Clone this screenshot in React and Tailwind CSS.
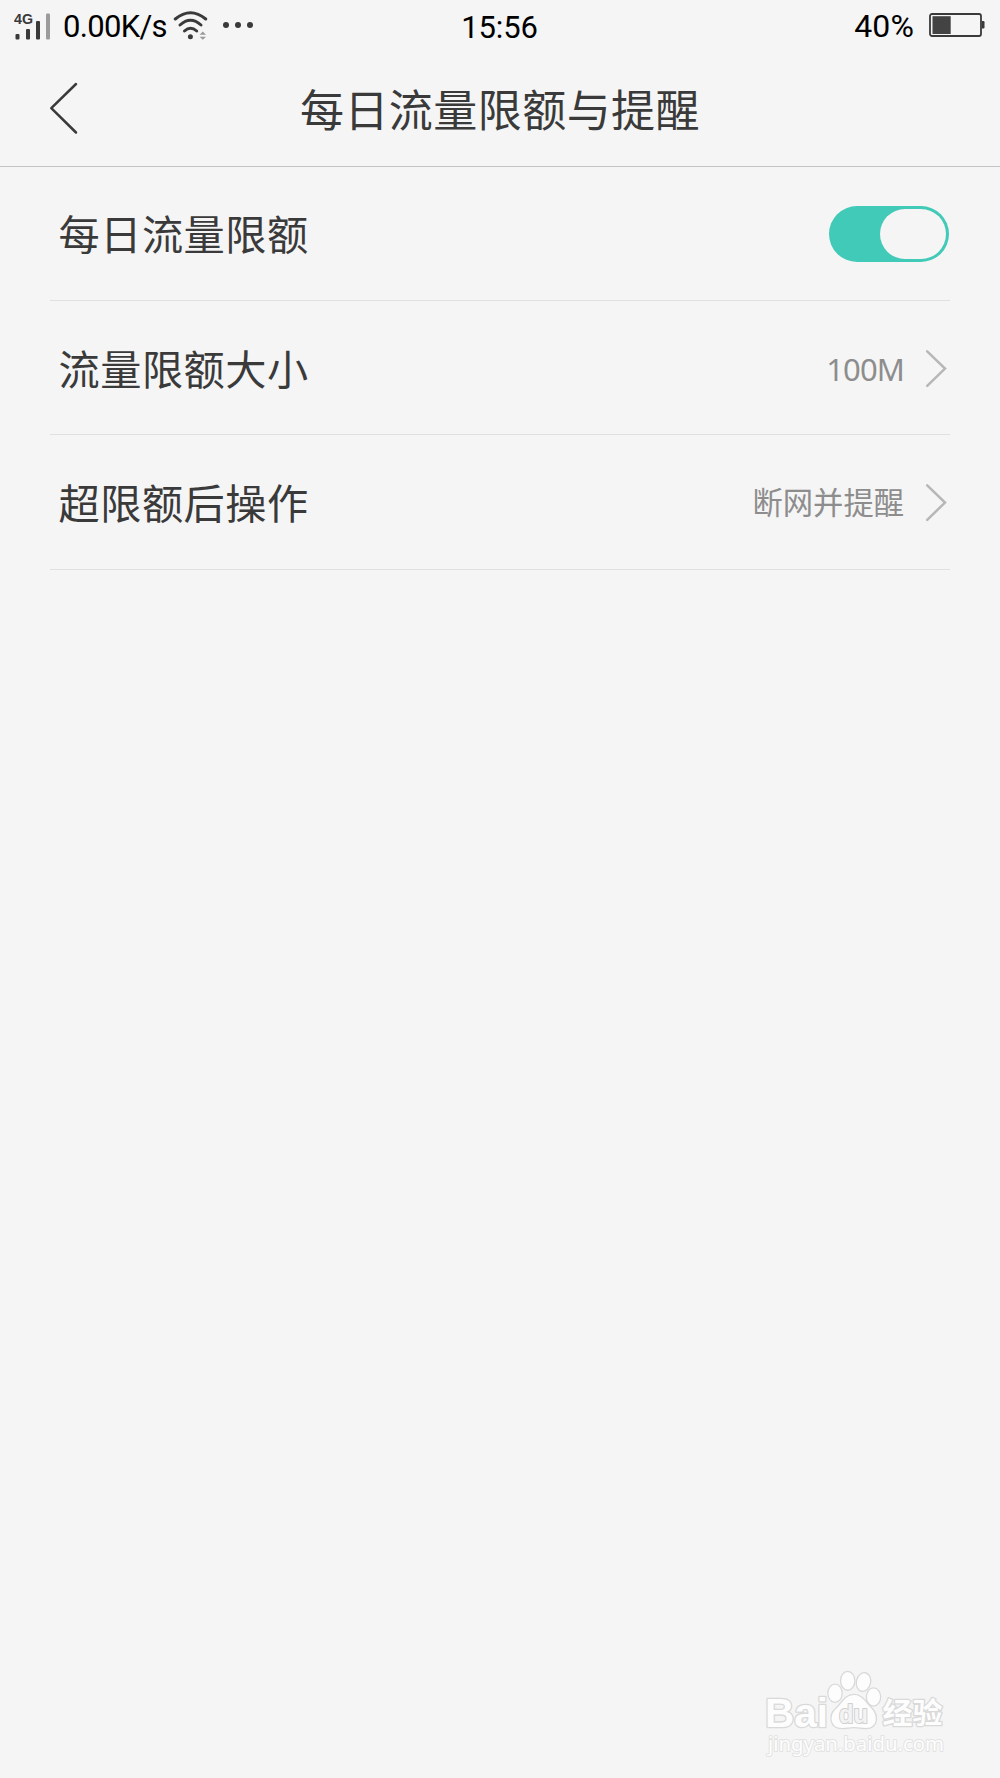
const INK = '#3a3a3a';

function Signal() {
  return (
    <svg className="block shrink-0" width="38" height="30" viewBox="0 0 38 30">
      <text x="0" y="13.5" fontSize="14" fontWeight="700" fill={INK} fontFamily='"Liberation Sans", sans-serif' textLength="19" lengthAdjust="spacingAndGlyphs">4G</text>
      <rect x="1.5" y="24" width="4" height="5.5" rx="1" fill={INK} />
      <rect x="12" y="19" width="4" height="10.5" rx="1" fill={INK} />
      <rect x="22" y="11" width="4" height="18.5" rx="1" fill={INK} />
      <rect x="32" y="3.5" width="4" height="26" rx="1" fill="#9b9b9b" />
    </svg>
  );
}

function Wifi() {
  return (
    <svg className="block shrink-0" width="36" height="30" viewBox="0 0 36 30">
      <g fill="none" stroke={INK} strokeWidth="3" strokeLinecap="round">
        <path d="M2.3 9 Q17.5 -3.6 32.7 9" />
        <path d="M7 15 Q17.5 5.6 28 15" />
        <path d="M11.5 21 Q17.5 15.4 23.7 21" />
      </g>
      <circle cx="17.4" cy="26.7" r="2.5" fill={INK} />
      <path d="M26.6 24.8 L29.8 21.4 L33 24.8Z M26.6 26.7 L33 26.7 L29.8 29.8Z" fill="#999" />
    </svg>
  );
}

function StatusBar() {
  return (
    <div className="flex h-[50px] items-center justify-between pl-[14px] pr-[15px] text-[31px] leading-none text-black">
      <div className="flex w-[390px] items-center">
        <Signal />
        <span className="ml-[11px] mt-[3px] w-[106px] whitespace-nowrap tracking-[-0.7px]">0.00K/s</span>
        <span className="ml-[4px]"><Wifi /></span>
        <span className="ml-[14px] flex gap-[6px]">
          <i className="size-[6px] rounded-full bg-[#3a3a3a]" />
          <i className="size-[6px] rounded-full bg-[#3a3a3a]" />
          <i className="size-[6px] rounded-full bg-[#3a3a3a]" />
        </span>
      </div>
      <span className="mt-[4px] tracking-[-0.1px]">15:56</span>
      <div className="flex w-[390px] items-center justify-end">
        <span className="mt-[2px] text-[32px] tracking-[0.1px]">40%</span>
        <svg className="ml-[15px] block" width="56" height="24" viewBox="0 0 56 24">
          <rect x="1" y="1" width="51" height="22" rx="2" fill="none" stroke={INK} strokeWidth="1.8" />
          <rect x="3.5" y="3.2" width="18.2" height="17.8" fill="#434343" />
          <path d="M53 8 H54.3 Q55.5 8 55.5 9.2 V14.3 Q55.5 15.5 54.3 15.5 H53Z" fill={INK} />
        </svg>
      </div>
    </div>
  );
}

function Chevron() {
  return (
    <svg className="ml-[21px] mr-[3px] mt-[2px] block shrink-0" width="22" height="40" viewBox="0 0 22 40" fill="none" stroke="#b7b7b7" strokeWidth="2.5" strokeLinecap="round">
      <path d="M2.2 2.4 L20 19.6 L2.2 36.8" />
    </svg>
  );
}

function Row({ label, children }) {
  return (
    <div className="flex h-[134.2px] items-center justify-between border-b border-[#e0e0e0] pl-[8.5px]">
      <span className="mt-[7px] text-[41.2px] leading-none tracking-[0.5px]">{label}</span>
      <div className="flex items-center text-[30.3px] leading-none text-[#8d8d8d]">{children}</div>
    </div>
  );
}

function Watermark() {
  const outlined = { fill: '#fdfdfd', stroke: '#d9d9d9', strokeWidth: 2.6, paintOrder: 'stroke', strokeLinejoin: 'round' };
  return (
    <svg className="block" width="192" height="92" viewBox="-8 0 192 92">
      <g fontWeight="700" fontFamily='"Liberation Sans", sans-serif' {...outlined}>
        <text x="-2" y="57" fontSize="40" textLength="63" lengthAdjust="spacingAndGlyphs">Bai</text>
        <ellipse cx="68" cy="23.3" rx="6.5" ry="8.5" />
        <ellipse cx="80.7" cy="10.8" rx="6.5" ry="8.8" />
        <ellipse cx="96.5" cy="12" rx="6.5" ry="8.8" transform="rotate(12 96.5 12)" />
        <ellipse cx="106.5" cy="27" rx="6.5" ry="8.5" />
        <path d="M87 25 C95 25 98 32 104 38 C111 45 111 58 99 58 C94 58 92 57 87 57 C82 57 80 58 75 58 C63 58 62 45 69 39 C75 34 78 25 87 25Z" />
        <text x="72" y="53" fontSize="25" textLength="29" lengthAdjust="spacingAndGlyphs" fill="#f3f3f3" stroke="#d0d0d0" strokeWidth="2">du</text>
        <text x="115.5" y="54" fontSize="29" textLength="60" lengthAdjust="spacingAndGlyphs" fontFamily='"Noto Sans CJK SC", sans-serif'>经验</text>
        <text x="1" y="81" fontSize="19.5" fontWeight="400" stroke="#e2e2e2" strokeWidth="1.8" textLength="176" lengthAdjust="spacingAndGlyphs" fontFamily='"Noto Sans", sans-serif'>jingyan.baidu.com</text>
      </g>
    </svg>
  );
}

export default function App() {
  return (
    <div className='flex h-[1778px] w-[1000px] flex-col bg-[#f5f5f5] font-[Roboto,"Noto_Sans_CJK_SC",sans-serif] text-[#3a3a3a]'>
      <StatusBar />
      <header className="grid h-[117px] grid-cols-[1fr_auto_1fr] items-center border-b-[1.5px] border-[#c4c4c4] pb-[1px]">
        <svg className="ml-[49px] mt-px block" width="30" height="54" viewBox="0 0 30 54" fill="none" stroke={INK} strokeWidth="2.5" strokeLinecap="round" strokeLinejoin="round">
          <path d="M27 3 L2.3 27.2 L27 51.5" />
        </svg>
        <h1 className="mt-[8px] text-[44px] leading-none tracking-[0.45px]">每日流量限额与提醒</h1>
        <span />
      </header>
      <main className="flex-1 px-[50px]">
        <Row label="每日流量限额">
          <div role="switch" aria-checked="true" className="mr-[1px] flex h-[56px] w-[120px] items-center justify-end rounded-full bg-[#41cab8] pr-[3px]">
            <div className="h-[50px] w-[66px] rounded-full bg-[#f5f5f5]" />
          </div>
        </Row>
        <Row label="流量限额大小">
          <span className='mt-[3px] font-["Noto_Sans",sans-serif] text-[31px] tracking-[-0.9px]'>100M</span>
          <Chevron />
        </Row>
        <Row label="超限额后操作">
          <span className="mt-[5px]">断网并提醒</span>
          <Chevron />
        </Row>
      </main>
      <footer className="flex justify-end pb-[16px] pr-[49px]">
        <Watermark />
      </footer>
    </div>
  );
}
